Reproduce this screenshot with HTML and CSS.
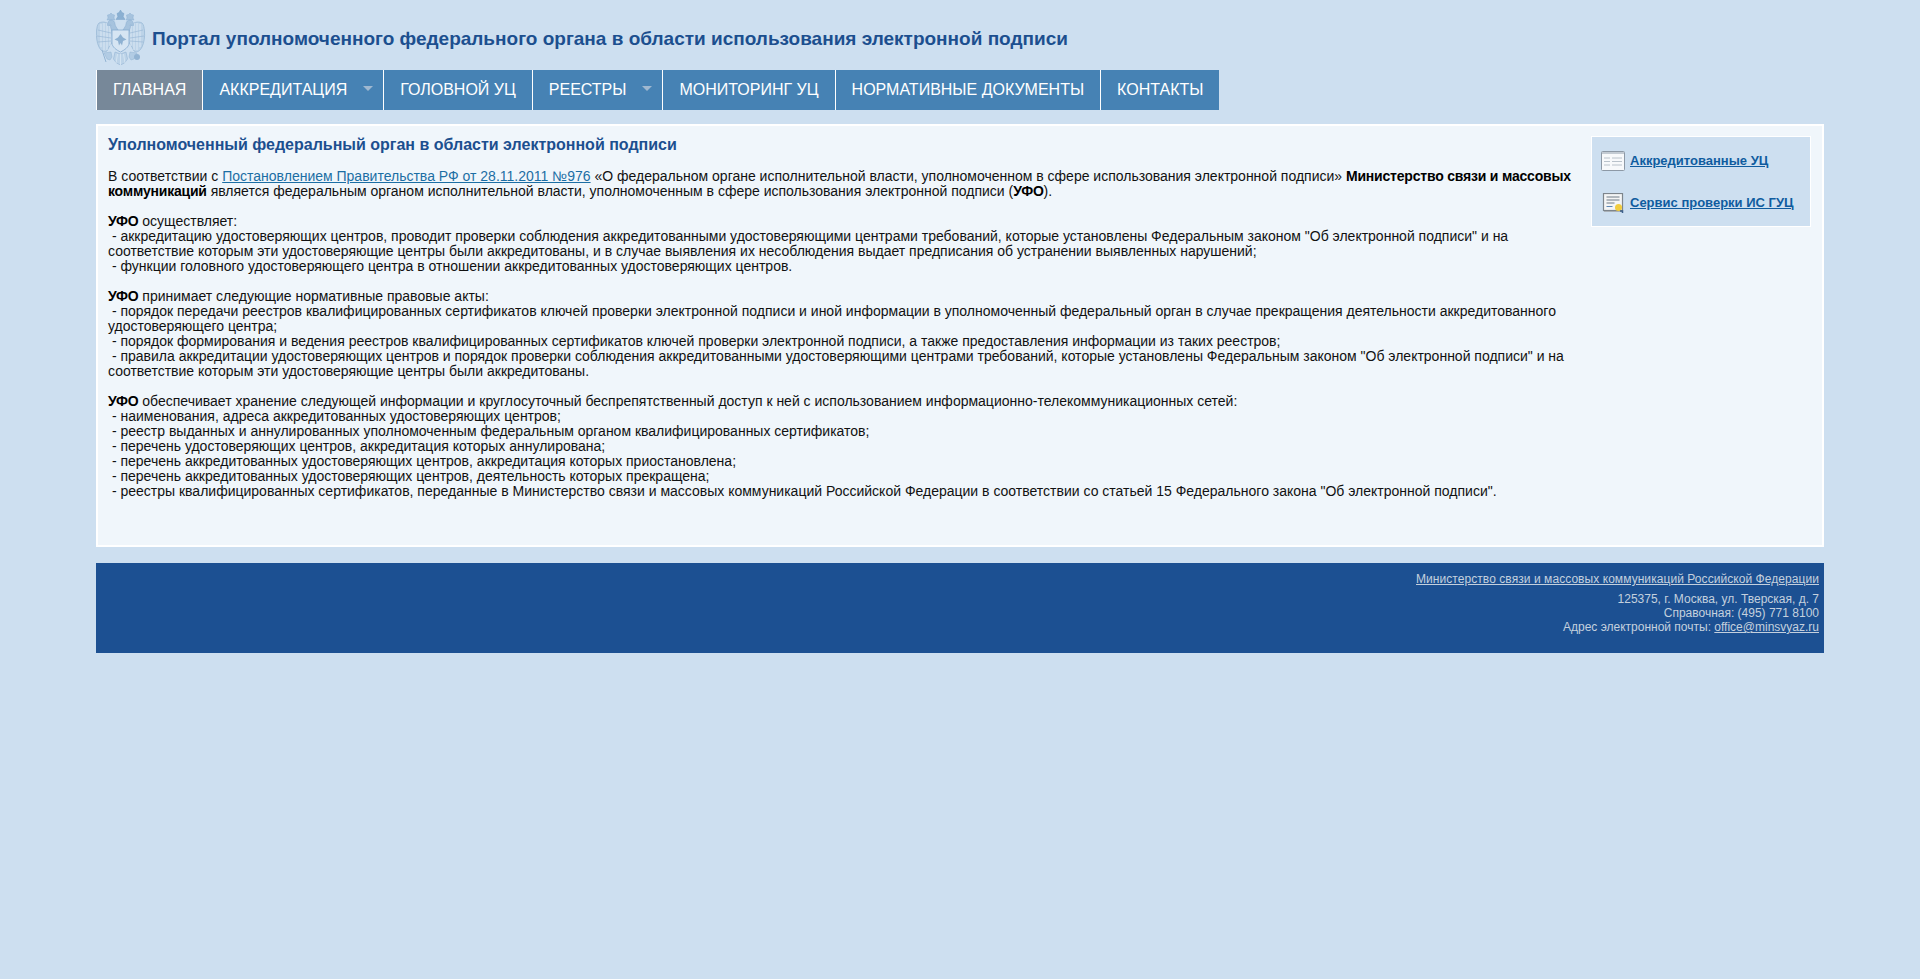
FILE: index.html
```html
<!DOCTYPE html>
<html lang="ru">
<head>
<meta charset="utf-8">
<title>Портал уполномоченного федерального органа</title>
<link rel="stylesheet" href="styles.css">
</head>
<body>
<div class="wrap">
  <header class="head">
    <svg class="emblem" viewBox="0 0 50 55" aria-hidden="true">
      <!-- wings -->
      <path d="M15 17C12 12 7 11 3 13 1 15 1 18 .5 21 0 27 1 33 3 37 5 41 8 43 11 41L13 37 17 31Z" fill="#bcd3e8" stroke="#93b4d3" stroke-width=".7"/>
      <path d="M34 17C37 12 42 11 46 13 48 15 48 18 48.500 21 49 27 48 33 46 37 44 41 41 43 38 41L36 37 32 31Z" fill="#bcd3e8" stroke="#93b4d3" stroke-width=".7"/>
      <path d="M5 14v23M8 13v27M11 13v27M14 16v20M44 14v23M41 13v27M38 13v27M35 16v20" stroke="#dbe8f4" stroke-width="1" fill="none"/>
      <path d="M2 20l13 3M1 26l14 2M2 32l13-1M47 20l-13 3M48 26l-14 2M47 32l-13-1" stroke="#93b4d3" stroke-width=".6" fill="none"/>
      <!-- crowns -->
      <path d="M24.500 0l1.500 2.500 2 1-.8 3 1.800 3h-9l1.800-3-.8-3 2-1z" fill="#8bb0d2" stroke="#7099c2" stroke-width=".4"/>
      <path d="M15 3l1.500 1.500 2 .5-.5 3 1 2h-8l1-2-.5-3 2-.5z" fill="#a6c3de" stroke="#86abcf" stroke-width=".4"/>
      <path d="M34 3l-1.500 1.500-2 .5.5 3-1 2h8l-1-2 .5-3-2-.5z" fill="#a6c3de" stroke="#86abcf" stroke-width=".4"/>
      <!-- heads and necks -->
      <path d="M15 10c2 0 4 1.500 4 4 0 2 2 4 3 6l-6 1c-1-3-2-4-1-6l-3.500.5c0-3 1-5.500 3.500-5.500z" fill="#a6c3de" stroke="#86abcf" stroke-width=".5"/>
      <path d="M34 10c-2 0-4 1.500-4 4 0 2-2 4-3 6l6 1c1-3 2-4 1-6l3.500.5c0-3-1-5.500-3.500-5.500z" fill="#a6c3de" stroke="#86abcf" stroke-width=".5"/>
      <!-- body shield -->
      <path d="M16 20h17v13c0 4-4.500 7-8.500 9-4-2-8.500-5-8.500-9z" fill="#d6e5f3" stroke="#86abcf" stroke-width=".8"/>
      <path d="M24.500 24l2.500 3.500 3.500 2-3.500 1.500-1 4.500-1.500-2.500-1.500 2.500-1-4.500-3.500-1.500 3.500-2z" fill="#8eb1d2"/>
      <!-- tail and legs -->
      <path d="M19 42l5.500 2 5.500-2 1.500 7-3 4-4 2-4-2-3-4z" fill="#bcd3e8" stroke="#93b4d3" stroke-width=".6"/>
      <path d="M24.500 44v11M21.500 44l-1.500 9M27.500 44l1.500 9" stroke="#dbe8f4" stroke-width=".8" fill="none"/>
      <path d="M8 43l7-1 1 5-2 3-3-1z" fill="#b2cce4" stroke="#93b4d3" stroke-width=".5"/>
      <path d="M41 43l-7-1-1 5 2 3 3-1z" fill="#b2cce4" stroke="#93b4d3" stroke-width=".5"/>
      <circle cx="41" cy="47" r="3" fill="#93b4d3"/>
      <path d="M6 40l4 12" stroke="#93b4d3" stroke-width="1" fill="none"/>
    </svg>
    <h1 class="site-title">Портал уполномоченного федерального органа в области использования электронной подписи</h1>
  </header>

  <nav class="menu">
    <a class="menu-item is-active" href="#">ГЛАВНАЯ</a>
    <a class="menu-item has-sub" href="#">АККРЕДИТАЦИЯ</a>
    <a class="menu-item" href="#">ГОЛОВНОЙ УЦ</a>
    <a class="menu-item has-sub" href="#">РЕЕСТРЫ</a>
    <a class="menu-item" href="#">МОНИТОРИНГ УЦ</a>
    <a class="menu-item" href="#">НОРМАТИВНЫЕ ДОКУМЕНТЫ</a>
    <a class="menu-item" href="#">КОНТАКТЫ</a>
  </nav>

  <main class="panel">
    <article class="article">
      <h2 class="article-title">Уполномоченный федеральный орган в области электронной подписи</h2>
      <p>В соответствии с <a href="#">Постановлением Правительства РФ от 28.11.2011 №976</a> «О федеральном органе исполнительной власти, уполномоченном в сфере использования электронной подписи» <b>Министерство связи и массовых коммуникаций</b> является федеральным органом исполнительной власти, уполномоченным в сфере использования электронной подписи (<b>УФО</b>).</p>
      <p><b>УФО</b> осуществляет:<br>
      &nbsp;- аккредитацию удостоверяющих центров, проводит проверки соблюдения аккредитованными удостоверяющими центрами требований, которые установлены Федеральным законом "Об электронной подписи" и на соответствие которым эти удостоверяющие центры были аккредитованы, и в случае выявления их несоблюдения выдает предписания об устранении выявленных нарушений;<br>
      &nbsp;- функции головного удостоверяющего центра в отношении аккредитованных удостоверяющих центров.</p>
      <p><b>УФО</b> принимает следующие нормативные правовые акты:<br>
      &nbsp;- порядок передачи реестров квалифицированных сертификатов ключей проверки электронной подписи и иной информации в уполномоченный федеральный орган в случае прекращения деятельности аккредитованного удостоверяющего центра;<br>
      &nbsp;- порядок формирования и ведения реестров квалифицированных сертификатов ключей проверки электронной подписи, а также предоставления информации из таких реестров;<br>
      &nbsp;- правила аккредитации удостоверяющих центров и порядок проверки соблюдения аккредитованными удостоверяющими центрами требований, которые установлены Федеральным законом "Об электронной подписи" и на соответствие которым эти удостоверяющие центры были аккредитованы.</p>
      <p><b>УФО</b> обеспечивает хранение следующей информации и круглосуточный беспрепятственный доступ к ней с использованием информационно-телекоммуникационных сетей:<br>
      &nbsp;- наименования, адреса аккредитованных удостоверяющих центров;<br>
      &nbsp;- реестр выданных и аннулированных уполномоченным федеральным органом квалифицированных сертификатов;<br>
      &nbsp;- перечень удостоверяющих центров, аккредитация которых аннулирована;<br>
      &nbsp;- перечень аккредитованных удостоверяющих центров, аккредитация которых приостановлена;<br>
      &nbsp;- перечень аккредитованных удостоверяющих центров, деятельность которых прекращена;<br>
      &nbsp;- реестры квалифицированных сертификатов, переданные в Министерство связи и массовых коммуникаций Российской Федерации в соответствии со статьей 15 Федерального закона "Об электронной подписи".</p>
    </article>
    <aside class="side">
      <a class="side-link" href="#">
        <svg class="side-icon" viewBox="0 0 24 20" aria-hidden="true">
          <rect x=".5" y=".5" width="23" height="19" rx="1" fill="#f7f9fb" stroke="#8d99a6"/>
          <rect x="1" y="1" width="22" height="2" fill="#c3cbd3"/>
          <path d="M3 7h6M11 7h10M3 10.500h6M11 10.500h10M3 14h6M11 14h10" stroke="#b9c2cb" fill="none"/>
        </svg>
        <span>Аккредитованные УЦ</span>
      </a>
      <a class="side-link" href="#">
        <svg class="side-icon" viewBox="0 0 24 20" aria-hidden="true">
          <rect x="2.500" y=".5" width="19" height="17" fill="#f4f5f5" stroke="#7d858c" stroke-width="1.200"/>
          <rect x="3" y="18" width="18" height="1" fill="#a9b0b7"/>
          <path d="M5.500 4h13M5.500 7h13M5.500 10h8" stroke="#6e7a86" fill="none"/>
          <path d="M5.500 13.500h6" stroke="#5c86b5" fill="none"/>
          <circle cx="17.500" cy="14.500" r="3.500" fill="#f1cc3f"/>
          <path d="M19 18h2.500v2" stroke="#3c5f8a" fill="none" stroke-width="1.500"/>
        </svg>
        <span>Сервис проверки ИС ГУЦ</span>
      </a>
    </aside>
  </main>

  <footer class="foot">
    <p class="foot-org"><a href="#">Министерство связи и массовых коммуникаций Российской Федерации</a></p>
    <p class="foot-info">125375, г. Москва, ул. Тверская, д. 7<br>
    Справочная: (495) 771 8100<br>
    Адрес электронной почты: <a href="#">office@minsvyaz.ru</a></p>
  </footer>
</div>
</body>
</html>
```
FILE: styles.css
```css
* { box-sizing: border-box; }
html, body { margin: 0; padding: 0; }
body {
  background: #cddff0;
  font-family: "Liberation Sans", Arial, sans-serif;
  color: #111;
  min-height: 979px;
}
.wrap { width: 1728px; margin: 0 auto; padding-top: 10px; }

.head { display: flex; align-items: center; gap: 6px; height: 55px; margin-bottom: 5px; }
.emblem { width: 50px; height: 55px; flex: none; }
.site-title { margin: 2px 0 0; font-size: 19px; font-weight: bold; line-height: 22px; color: #1c4f8f; }

.menu { display: flex; height: 40px; }
.menu-item {
  display: block;
  background: #4682b4;
  color: #fff;
  font-size: 16px;
  line-height: 40px;
  padding: 0 16px;
  text-decoration: none;
  border-left: 1px solid #fff;
  white-space: nowrap;
}
.is-active { background: #778899; }
.has-sub { position: relative; padding-right: 36px; }
.has-sub::after {
  content: "";
  position: absolute;
  right: 10px;
  top: 16px;
  border: 5px solid transparent;
  border-top: 5px solid #9fb8d0;
  border-bottom: 0;
}

.panel {
  display: flex;
  align-items: flex-start;
  margin-top: 14px;
  height: 423px;
  background: #f0f6fb;
  border: 2px solid #fff;
  padding: 10px 11px 0 10px;
  font-size: 14px;
  line-height: 15px;
}
.article { flex: 1; min-width: 0; padding-right: 8px; }
.article-title { margin: 0 0 15px; font-size: 16px; line-height: 18px; font-weight: bold; color: #1c4f8f; }
.article p { margin: 0 0 15px; }
.article a { color: #1c6ea4; }
.article b { color: #000; letter-spacing: -.2px; }

.side {
  flex: none;
  width: 220px;
  height: 91px;
  padding: 12px 9px 0;
  background: #cddff0;
  border: 1px solid #fff;
  display: flex;
  flex-direction: column;
  gap: 19px;
}
.side-link {
  display: flex;
  align-items: center;
  gap: 5px;
  height: 23px;
  color: #0f5c9f;
  font-size: 13px;
  font-weight: bold;
}
.side-icon { width: 24px; height: 20px; flex: none; }

.foot {
  margin-top: 16px;
  height: 90px;
  background: #1c5092;
  color: #c4d0de;
  text-align: right;
  padding: 9px 5px 0;
  font-size: 12px;
  line-height: 14px;
}
.foot p { margin: 0; }
.foot-org { padding-bottom: 6px; letter-spacing: .06px; }
.foot a { color: #c4d0de; }
```
